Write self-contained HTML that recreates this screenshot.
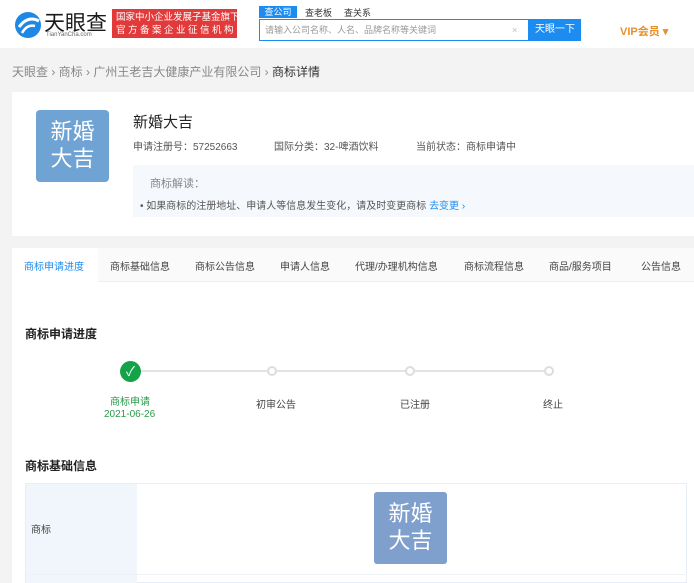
<!DOCTYPE html><html><head><meta charset="utf-8"><style>
*{margin:0;padding:0;box-sizing:border-box}
body{width:694px;height:583px;overflow:hidden;background:#f3f3f3;font-family:"Liberation Sans","Noto Sans CJK SC",sans-serif;position:relative;color:#333}
.a{position:absolute;white-space:nowrap}
</style></head><body>
<div class="a" style="left:0;top:0;width:694px;height:48px;background:#fff"></div>
<svg class="a" style="left:13px;top:10px" width="30" height="30" viewBox="0 0 30 30"><circle cx="15" cy="15" r="13" fill="#1e88e5"/><path d="M6 17 Q15 5 26 11" stroke="#fff" stroke-width="3" fill="none"/><path d="M9 23 Q14 14 22 16" stroke="#fff" stroke-width="2.5" fill="none"/></svg>
<div class="a" style="left:44px;top:7px;font-size:21px;color:#1a1a1a">天眼查</div>
<div class="a" style="left:46px;top:32px;font-size:6px;color:#666">TianYanCha.com</div>
<div class="a" style="left:112px;top:9px;width:125px;height:29px;background:#e23a3a;color:#fff;font-size:9.5px;line-height:13px;padding:2px 4px">国家中小企业发展子基金旗下<br><span style="letter-spacing:2.5px">官方备案企业征信机构</span></div>
<div class="a" style="left:259px;top:6px;width:38px;height:12px;background:#1d8cf0;color:#fff;font-size:9px;text-align:center;line-height:12px">查公司</div>
<div class="a" style="left:305px;top:6px;font-size:9px;color:#333">查老板</div>
<div class="a" style="left:344px;top:6px;font-size:9px;color:#333">查关系</div>
<div class="a" style="left:259px;top:19px;width:270px;height:22px;border:1px solid #1d8cf0;background:#fff;font-size:9px;color:#999;line-height:20px;padding-left:5px">请输入公司名称、人名、品牌名称等关键词<span style="position:absolute;left:252px;color:#bbb">×</span></div>
<div class="a" style="left:529px;top:19px;width:52px;height:22px;background:#1d8cf0;color:#fff;font-size:10px;line-height:22px;text-align:center">天眼一下</div>
<div class="a" style="left:620px;top:23px;font-size:11px;color:#e8902a;font-weight:bold">VIP会员 ▾</div>
<div class="a" style="left:12px;top:63px;font-size:12px;color:#888">天眼查 › 商标 › 广州王老吉大健康产业有限公司 › <span style="color:#333">商标详情</span></div>
<div class="a" style="left:12px;top:92px;width:682px;height:144px;background:#fff"></div>
<div class="a" style="left:36px;top:110px;width:73px;height:72px;background:#6fa3d3;border-radius:4px;color:#fff;font-size:22px;line-height:27px;text-align:center;padding-top:8px">新婚<br>大吉</div>
<div class="a" style="left:133px;top:111px;font-size:15px;color:#222">新婚大吉</div>
<div class="a" style="left:133px;top:138px;font-size:10px;color:#555">申请注册号：57252663</div>
<div class="a" style="left:274px;top:138px;font-size:10px;color:#555">国际分类：32-啤酒饮料</div>
<div class="a" style="left:416px;top:138px;font-size:10px;color:#555">当前状态：商标申请中</div>
<div class="a" style="left:133px;top:165px;width:561px;height:52px;background:#f5f9fd"></div>
<div class="a" style="left:150px;top:175px;font-size:11px;color:#888">商标解读：</div>
<div class="a" style="left:140px;top:197px;font-size:10px;color:#555">• 如果商标的注册地址、申请人等信息发生变化，请及时变更商标 <span style="color:#1d8cf0">去变更 ›</span></div>
<div class="a" style="left:12px;top:248px;width:682px;height:335px;background:#fff"></div>
<div class="a" style="left:12px;top:248px;width:682px;height:34px;background:#fafafa;border-bottom:1px solid #eee"></div>
<div class="a" style="left:12px;top:248px;width:86px;height:35px;background:#fff"></div>
<div class="a" style="top:258px;left:24px;font-size:10px;color:#1d8cf0">商标申请进度</div>
<div class="a" style="top:258px;left:110px;font-size:10px;color:#444">商标基础信息</div>
<div class="a" style="top:258px;left:195px;font-size:10px;color:#444">商标公告信息</div>
<div class="a" style="top:258px;left:280px;font-size:10px;color:#444">申请人信息</div>
<div class="a" style="top:258px;left:355px;font-size:10px;color:#444">代理/办理机构信息</div>
<div class="a" style="top:258px;left:464px;font-size:10px;color:#444">商标流程信息</div>
<div class="a" style="top:258px;left:549px;font-size:10px;color:#444">商品/服务项目</div>
<div class="a" style="top:258px;left:641px;font-size:10px;color:#444">公告信息</div>
<div class="a" style="left:25px;top:325px;font-size:12px;color:#222;font-weight:bold">商标申请进度</div>
<div class="a" style="left:130px;top:370px;width:420px;height:2px;background:#e3e3e3"></div>
<div class="a" style="left:120px;top:361px;width:21px;height:21px;border-radius:50%;background:#15a34a;color:#fff;font-size:13px;text-align:center;line-height:21px">✓</div>
<div class="a" style="left:267px;top:366px;width:10px;height:10px;border-radius:50%;background:#fff;border:2px solid #ddd"></div>
<div class="a" style="left:405px;top:366px;width:10px;height:10px;border-radius:50%;background:#fff;border:2px solid #ddd"></div>
<div class="a" style="left:544px;top:366px;width:10px;height:10px;border-radius:50%;background:#fff;border:2px solid #ddd"></div>
<div class="a" style="left:110px;top:393px;font-size:10px;color:#2a9a4a">商标申请</div>
<div class="a" style="left:104px;top:409px;font-size:10px;color:#2a9a4a">2021-06-26</div>
<div class="a" style="left:256px;top:396px;font-size:10px;color:#444">初审公告</div>
<div class="a" style="left:400px;top:396px;font-size:10px;color:#444">已注册</div>
<div class="a" style="left:543px;top:396px;font-size:10px;color:#444">终止</div>
<div class="a" style="left:25px;top:457px;font-size:12px;color:#222;font-weight:bold">商标基础信息</div>
<div class="a" style="left:25px;top:483px;width:662px;height:100px;border:1px solid #e8eef5"></div>
<div class="a" style="left:26px;top:484px;width:111px;height:99px;background:#f0f6fc"></div>
<div class="a" style="left:31px;top:521px;font-size:10px;color:#444">商标</div>
<div class="a" style="left:374px;top:492px;width:73px;height:72px;background:#7f9fcc;border-radius:3px;color:#fff;font-size:22px;line-height:27px;text-align:center;padding-top:8px">新婚<br>大吉</div>
<div class="a" style="left:26px;top:574px;width:661px;height:1px;background:#eef2f6"></div>
</body></html>
